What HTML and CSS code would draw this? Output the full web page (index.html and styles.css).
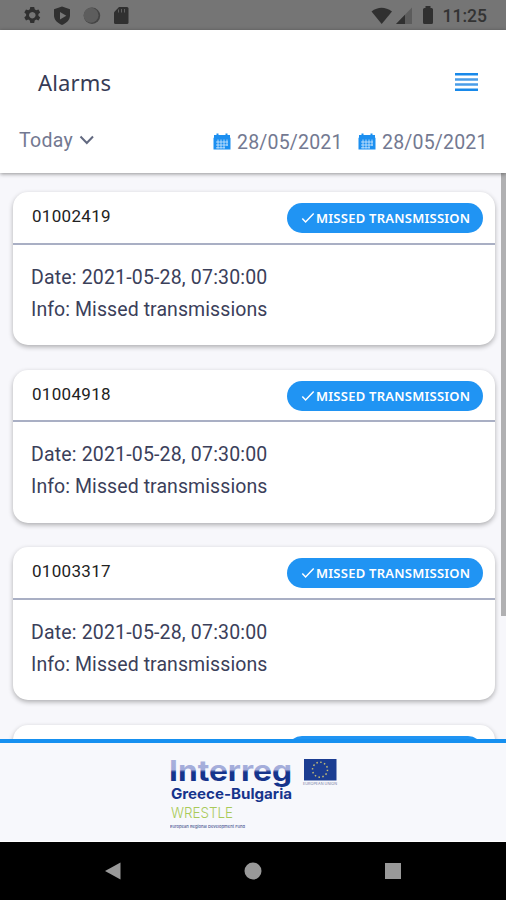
FILE: index.html
```html
<!DOCTYPE html>
<html lang="en">
<head>
<meta charset="utf-8">
<title>Alarms</title>
<link rel="stylesheet" href="styles.css">
</head>
<body>
<svg class="defs" width="0" height="0" aria-hidden="true">
  <symbol id="calendar" viewBox="0 0 18 17">
    <path fill="#1c8ff0" d="M1 2h2.500V.5h2V2h7V.5h2V2H17v3H1zM.5 4.800h17V16.500H.5z"/>
    <path stroke="#d5ebff" stroke-width=".8" d="M5 6.500v9M8 6.500v9M11 6.500v9M14 6.500v6.500M3 9h12M3 12h12M3 14.800h9" fill="none"/>
  </symbol>
  <symbol id="check" viewBox="0 0 14 12">
    <path d="M1.300 6.500 4.600 10 12.700 1.500" fill="none" stroke="#fff" stroke-width="1.500"/>
  </symbol>
</svg>
<div class="status">
  <svg class="status-left" width="110" height="22" viewBox="0 0 110 22">
    <g fill="#303030">
      <path fill-rule="evenodd" d="m7.300 2 .5-0h3.400l.5 2.300 1.500.9 2.300-.8 1.700 3-1.800 1.600v1.800l1.800 1.600-1.700 3-2.300-.8-1.500.9-.5 2.500H7.300l-.5-2.500-1.500-.9-2.300.8-1.700-3 1.800-1.600V9L1.300 7.400l1.700-3 2.300.8 1.500-.9zM9.300 6.900a3.300 3.300 0 1 0 .01 0z"/>
      <path d="m39 1.500 8 2.700v6.300c0 4.500-3.500 7.600-8 9.500-4.500-1.900-8-5-8-9.500V4.200z"/>
      <path d="M96 2h8q1.500 0 1.500 1.500v14q0 1.500-1.500 1.500H92.500q-1.500 0-1.500-1.500V7.300z"/>
    </g>
    <path d="m37 6.900 6.300 3.800-6.300 3.800z" fill="#777"/>
    <circle cx="69" cy="10.800" r="8.200" fill="#444"/>
    <circle cx="68" cy="10.200" r="7.500" fill="#5d5d5d"/>
    <path d="M95.500 4.500v3M98.500 4v3.500M101.500 4v3.500" stroke="#606060"/>
  </svg>
  <svg class="status-right" width="64" height="20" viewBox="0 0 64 20">
    <path d="M.5 5.500Q10.500-2 21 5.500L10.700 18z" fill="#303030"/>
    <path d="M41 1.500V18H25z" fill="#5c5c5c"/>
    <path d="M34 8.700V18h-9z" fill="#303030"/>
    <path d="M54.500 0h5v2h1q1.500 0 1.500 1.500v13q0 1.500-1.500 1.500h-7q-1.500 0-1.500-1.500v-13Q52 2 53.500 2h1z" fill="#303030"/>
  </svg>
  <span class="clock">11:25</span>
</div>
<header class="header">
  <div class="title-row">
    <h1>Alarms</h1>
    <svg width="23" height="18" viewBox="0 0 23 18"><path d="M0 1.300h23M0 16.700h23" stroke="#1889ea" stroke-width="2.400"/><path d="M0 6.500h23M0 11.500h23" stroke="#4a9de8" stroke-width="2.400"/></svg>
  </div>
  <div class="filters">
    <span class="range">Today</span>
    <svg class="chevron" width="16" height="10" viewBox="0 0 16 10"><path d="m1.500 1.500 6.300 6.500L14 1.500" fill="none" stroke="#626980" stroke-width="2"/></svg>
    <svg class="cal" width="18" height="17"><use href="#calendar"/></svg>
    <span class="date">28/05/2021</span>
    <svg class="cal second" width="18" height="17"><use href="#calendar"/></svg>
    <span class="date">28/05/2021</span>
  </div>
</header>
<main class="list">
  <div class="cards">
    <article class="card">
      <div class="card-head"><span class="device">01002419</span><span class="badge"><svg width="14" height="12"><use href="#check"/></svg><span>MISSED TRANSMISSION</span></span></div>
      <div class="card-body"><p class="when">Date: 2021-05-28, 07:30:00</p><p class="info">Info: Missed transmissions</p></div>
    </article>
    <article class="card">
      <div class="card-head"><span class="device">01004918</span><span class="badge"><svg width="14" height="12"><use href="#check"/></svg><span>MISSED TRANSMISSION</span></span></div>
      <div class="card-body"><p class="when">Date: 2021-05-28, 07:30:00</p><p class="info">Info: Missed transmissions</p></div>
    </article>
    <article class="card">
      <div class="card-head"><span class="device">01003317</span><span class="badge"><svg width="14" height="12"><use href="#check"/></svg><span>MISSED TRANSMISSION</span></span></div>
      <div class="card-body"><p class="when">Date: 2021-05-28, 07:30:00</p><p class="info">Info: Missed transmissions</p></div>
    </article>
    <article class="card">
      <div class="card-head"><span class="badge"></span></div>
      <div class="card-body"></div>
    </article>
  </div>
  <div class="scroll"></div>
</main>
<footer class="footer">
  <svg width="168" height="84" viewBox="0 -8 168 84">
    <defs>
      <linearGradient id="ink" gradientUnits="userSpaceOnUse" x1="0" y1="0" x2="0" y2="30">
        <stop offset="0" stop-color="#a9b1dc"/><stop offset=".42" stop-color="#a3acda"/><stop offset=".5" stop-color="#16348c"/><stop offset="1" stop-color="#16348c"/>
      </linearGradient>
    </defs>
    <text class="brand" x="-1" y="23.500" textLength="123" lengthAdjust="spacingAndGlyphs" fill="url(#ink)">Interreg</text>
    <text class="region" x="1" y="42" textLength="121" lengthAdjust="spacingAndGlyphs">Greece-Bulgaria</text>
    <text class="project" x="1" y="60.500" textLength="62" lengthAdjust="spacingAndGlyphs">WRESTLE</text>
    <text class="fund" x="0" y="71" textLength="75" lengthAdjust="spacingAndGlyphs">European Regional Development Fund</text>
    <rect x="134" y="2" width="32.500" height="21.500" fill="#1b3d92"/>
    <circle cx="150" cy="12.700" r="7.500" fill="none" stroke="#c5bd76" stroke-width="1.500" stroke-dasharray="1.500 2.427"/>
    <text class="union" x="133" y="28" textLength="34" lengthAdjust="spacingAndGlyphs">EUROPEAN UNION</text>
  </svg>
</footer>
<nav class="nav">
  <svg width="16" height="18" viewBox="0 0 16 18"><path d="M0 9 15.500.500v17z" fill="#999"/></svg>
  <svg width="18" height="18" viewBox="0 0 18 18"><circle cx="9" cy="9" r="8.500" fill="#999"/></svg>
  <svg width="16" height="16" viewBox="0 0 16 16"><path d="M0 0h16v16H0z" fill="#999"/></svg>
</nav>
</body>
</html>
```
FILE: styles.css
```css
* { box-sizing: border-box; }
body {
  margin: 0;
  width: 506px;
  height: 900px;
  overflow: hidden;
  display: flex;
  flex-direction: column;
  background: #f7f7fb;
  font-family: Roboto, sans-serif;
}
.defs { position: absolute; }
svg { display: block; flex: none; }
h1, p { margin: 0; }
span, p, h1 { white-space: nowrap; }

.status {
  height: 30px;
  flex: none;
  display: flex;
  background: #757575;
  color: #333;
}
.status-left { margin: 4.500px 0 0 23px; }
.status-right { margin: 6px 0 0 237.500px; }
.clock { margin-left: 8px; font-size: 17.500px; line-height: 32px; font-weight: 500; letter-spacing: 0; }

.header {
  height: 143px;
  flex: none;
  background: #fff;
  box-shadow: 0 1px 4px rgba(0, 0, 0, .42);
  position: relative;
}
.title-row { height: 105px; padding: 0 28px 0 38px; display: flex; align-items: center; justify-content: space-between; margin-top: -1px; }
h1 { font: 400 22px/30px "Noto Sans", sans-serif; letter-spacing: .15px; color: #363b55; }
.filters { display: flex; align-items: flex-start; padding-left: 19px; margin-top: -5px; color: #737991; font-size: 19.500px; line-height: 24px; }
.range { width: 54px; margin-top: -.5px; letter-spacing: .3px; }
.chevron { margin: 6px 0 0 6px; }
.cal { margin: 4px 6px 0 118px; }
.cal.second { margin-left: 17px; }
.date { width: 104px; margin-top: 2px; letter-spacing: .18px; }

.list { height: 566px; flex: none; overflow: hidden; display: flex; justify-content: space-between; }
.cards { padding: 19px 0 0 13px; width: 495px; display: grid; grid-auto-rows: 153.300px; gap: 24.300px; }
.card { background: #fff; border-radius: 15px; box-shadow: 0 2px 5px rgba(0, 0, 0, .3); }
.card-head {
  height: 52.500px;
  padding: 0 12px 0 19px;
  border-bottom: 2px solid #a9afc4;
  display: flex;
  justify-content: space-between;
}
.device { font-size: 17px; line-height: 48px; color: #222; letter-spacing: .3px; }
.badge {
  width: 196px;
  height: 30px;
  margin: 11px 0 0 auto;
  padding-left: 14px;
  border-radius: 15px;
  background: #2094f3;
  color: #fff;
  display: flex;
  align-items: center;
  gap: 1px;
  font: 600 13px/30px "Noto Sans", sans-serif;
  letter-spacing: .24px;
}
.card-body { padding: 17px 18px; color: #3b405a; font-size: 19.500px; line-height: 32px; }
.when { letter-spacing: .17px; }
.info { letter-spacing: .08px; }
.scroll { width: 5px; height: 443px; background: #b0b0b2; }

.footer { height: 103px; flex: none; border-top: 4px solid #1690f0; border-bottom: 1px solid #fff; background: #f7f8fc; padding: 6px 0 0 170px; }
.footer text { font-family: Inter, sans-serif; }
.footer .brand { font-size: 28px; font-weight: 700; }
.footer .region { font-size: 14.500px; font-weight: 700; fill: #16348c; }
.footer .project { font-size: 14.500px; font-weight: 300; fill: #a9ca59; }
.footer .fund { font-size: 4px; font-weight: 500; fill: #4b5791; }
.footer .union { font-size: 3.500px; fill: #777fa5; }

.nav { height: 58px; flex: none; background: #000; display: flex; align-items: center; justify-content: space-between; padding: 0 105px; }
```
